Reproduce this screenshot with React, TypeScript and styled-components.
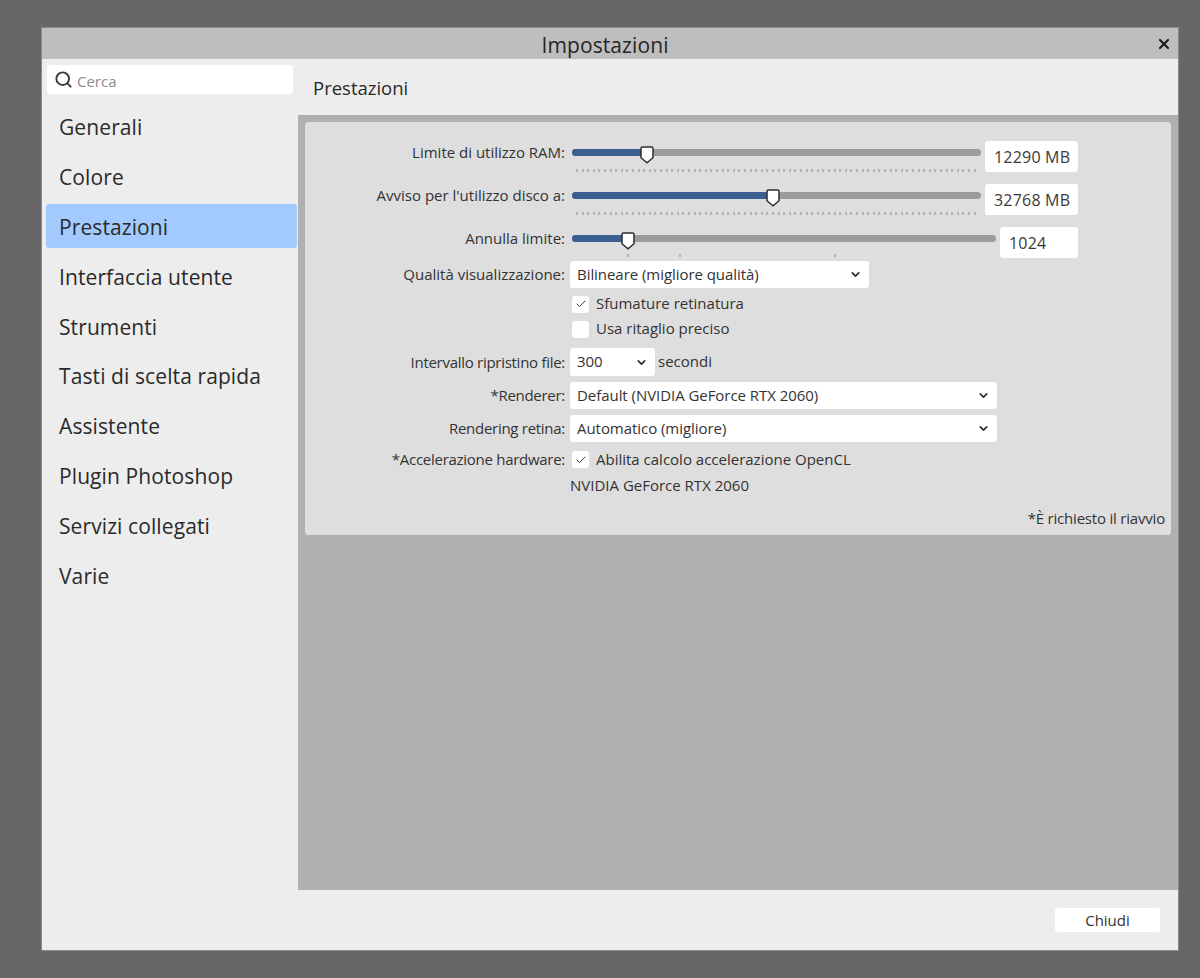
import React from 'react'
import styled, { createGlobalStyle } from 'styled-components'
import { Check, ChevronDown, Search, X } from 'lucide-react'

const GlobalStyle = createGlobalStyle`
  html, body {
    margin: 0;
    padding: 0;
    background: #676767;
  }
  body {
    font-family: 'Open Sans', 'Noto Sans', sans-serif;
    color: #2b2b2b;
  }
`

const sections = [
  'Generali',
  'Colore',
  'Prestazioni',
  'Interfaccia utente',
  'Strumenti',
  'Tasti di scelta rapida',
  'Assistente',
  'Plugin Photoshop',
  'Servizi collegati',
  'Varie',
]

const Page = styled.div`
  width: 1200px;
  height: 978px;
  padding: 28px 22px 28px 42px;
  box-sizing: border-box;
  overflow: hidden;
`

const Dialog = styled.div`
  height: 922px;
  display: flex;
  flex-direction: column;
  background: #ededed;
  box-shadow: 0 0 0 1px #8a8a8a;
`

const TitleBar = styled.div`
  position: relative;
  flex: 0 0 31px;
  display: flex;
  align-items: center;
  justify-content: center;
  box-sizing: border-box;
  padding: 2px 10px 0 0;
  background: #bebebe;
  font-size: 21px;
  letter-spacing: 0.1px;
  color: #262626;
`

const CloseButton = styled.span`
  position: absolute;
  right: 6px;
  top: 8px;
  display: flex;
  color: #1c1c1c;
`

const Body = styled.div`
  flex: 1;
  display: flex;
  min-height: 0;
`

const Sidebar = styled.aside`
  flex: 0 0 256px;
  box-sizing: border-box;
  padding: 6px 1px 0 4px;
`

const SearchBox = styled.div`
  height: 29px;
  margin: 0 4px 10px 1px;
  display: flex;
  align-items: center;
  gap: 4px;
  padding: 2px 0 0 7px;
  box-sizing: border-box;
  background: #fff;
  border-radius: 3px;
  font-size: 15px;
  color: #8d8d8d;
  svg {
    color: #3a3a3a;
    margin-top: -3px;
  }
`

const NavList = styled.nav`
  display: flex;
  flex-direction: column;
  gap: 5.9px;
`

const NavItem = styled.div<{ $active?: boolean }>`
  height: 44px;
  display: flex;
  align-items: center;
  padding: 2px 0 0 13px;
  box-sizing: border-box;
  border-radius: 3px;
  font-size: 21px;
  letter-spacing: 0.1px;
  color: #2a2a2a;
  background: ${p => (p.$active ? '#a2cafe' : 'transparent')};
`

const Main = styled.main`
  flex: 1;
  display: flex;
  flex-direction: column;
  min-width: 0;
`

const Heading = styled.div`
  flex: 0 0 56px;
  display: flex;
  align-items: center;
  box-sizing: border-box;
  padding: 1px 0 0 15px;
  font-size: 18.5px;
  color: #2a2a2a;
`

const Content = styled.div`
  flex: 1;
  padding: 7px;
  background: #b0b0b0;
`

const Panel = styled.section`
  position: relative;
  height: 413px;
  box-sizing: border-box;
  padding-top: 19px;
  background: #dedede;
  border-radius: 3px;
`

const Row = styled.div<{ $top?: number; $height: number }>`
  display: grid;
  grid-template-columns: 260px 1fr;
  column-gap: 5px;
  align-items: center;
  height: ${p => p.$height}px;
  margin-top: ${p => p.$top ?? 0}px;
`

const Label = styled.label<{ $slider?: boolean; $tight?: boolean }>`
  justify-self: end;
  align-self: ${p => (p.$slider ? 'start' : 'center')};
  line-height: ${p => (p.$slider ? '23px' : 'normal')};
  margin-top: ${p => (p.$slider ? '0' : '-1px')};
  font-size: 15px;
  letter-spacing: ${p => (p.$tight ? '-0.28px' : '0')};
  white-space: nowrap;
  color: #333;
`

const Controls = styled.div`
  display: flex;
  align-items: center;
  min-width: 0;
  font-size: 15px;
  color: #333;
`

const SliderField = styled.div<{ $width: number }>`
  position: relative;
  flex: 0 0 ${p => p.$width}px;
  margin-left: 2px;
  height: 31px;
`

const Track = styled.div`
  position: absolute;
  left: 0;
  right: 0;
  top: 8px;
  height: 7px;
  border-radius: 4px;
  background: #9c9c9c;
`

const TrackFill = styled.div`
  height: 100%;
  border-radius: 4px 0 0 4px;
  background: #3a5f8f;
`

const Thumb = styled.svg`
  position: absolute;
  top: 5px;
  margin-left: -7px;
`

const DottedTicks = styled.div`
  position: absolute;
  left: 4px;
  right: 3px;
  top: 28px;
  height: 3px;
  background: repeating-linear-gradient(90deg, #b3b3b3 0 2px, transparent 2px 5.6px);
`

const Tick = styled.i`
  position: absolute;
  top: 27px;
  width: 2px;
  height: 3px;
  background: #b3b3b3;
`

const ValueInput = styled.div<{ $width: number }>`
  flex: 0 0 ${p => p.$width}px;
  box-sizing: border-box;
  height: 31px;
  margin-left: 4px;
  padding: 4px 0 0 9px;
  line-height: 24px;
  background: #fff;
  border-radius: 3px;
  font-size: 16px;
  letter-spacing: 0.2px;
  color: #3a3a3a;
`

const Select = styled.div<{ $width: number }>`
  flex: 0 0 ${p => p.$width}px;
  box-sizing: border-box;
  height: 100%;
  display: flex;
  align-items: center;
  justify-content: space-between;
  padding: 0 7px 0 7px;
  background: #fff;
  border-radius: 3px;
  color: #333;
  svg {
    color: #2a2a2a;
  }
`

const SelectText = styled.span`
  margin-top: -2px;
  letter-spacing: -0.05px;
`

const SelectRow = styled(Controls)`
  height: 100%;
`

const Box = styled.span`
  flex: 0 0 17px;
  height: 17px;
  margin: 0 7px 0 2px;
  display: flex;
  align-items: center;
  justify-content: center;
  background: #fff;
  border-radius: 3px;
  color: #3d3d3d;
`

const CheckText = styled.span`
  margin-top: -2px;
`

const Suffix = styled.span`
  margin: -2px 0 0 3px;
`

const Footnote = styled.div`
  position: absolute;
  right: 6px;
  bottom: 7px;
  font-size: 15px;
  letter-spacing: -0.2px;
  color: #333;
`

const Footer = styled.footer`
  flex: 0 0 60px;
  display: flex;
  align-items: flex-start;
  justify-content: flex-end;
  box-sizing: border-box;
  padding: 18px 18px 0 0;
`

const Button = styled.button`
  width: 105px;
  height: 24px;
  padding: 0;
  border: 0;
  border-radius: 3px;
  background: #fff;
  font-family: inherit;
  font-size: 15px;
  color: #333;
`

const Slider = ({ value, width, ticks }: { value: number; width: number; ticks?: number[] }) => (
  <SliderField $width={width}>
    <Track>
      <TrackFill style={{ width: value }} />
    </Track>
    {ticks ? ticks.map(t => <Tick key={t} style={{ left: t }} />) : <DottedTicks />}
    <Thumb width="14" height="18" viewBox="0 0 14 18" style={{ left: value }}>
      <path
        d="M2.5 1h9a1.5 1.5 0 0 1 1.5 1.5v9.2L7 16.8 1 11.7V2.5A1.5 1.5 0 0 1 2.5 1z"
        fill="#fff"
        stroke="#2e2e2e"
        strokeWidth="1.5"
      />
    </Thumb>
  </SliderField>
)

const Dropdown = ({ width, children }: { width: number; children: React.ReactNode }) => (
  <Select $width={width}>
    <SelectText>{children}</SelectText>
    <ChevronDown size={13} strokeWidth={3} />
  </Select>
)

const CheckBox = ({ checked }: { checked?: boolean }) => (
  <Box>{checked && <Check size={12} strokeWidth={2} />}</Box>
)

export default function App() {
  return (
    <Page>
      <GlobalStyle />
      <Dialog>
        <TitleBar>
          Impostazioni
          <CloseButton>
            <X size={16} strokeWidth={3.2} />
          </CloseButton>
        </TitleBar>
        <Body>
          <Sidebar>
            <SearchBox>
              <Search size={19} strokeWidth={2.4} />
              Cerca
            </SearchBox>
            <NavList>
              {sections.map(s => (
                <NavItem key={s} $active={s === 'Prestazioni'}>
                  {s}
                </NavItem>
              ))}
            </NavList>
          </Sidebar>
          <Main>
            <Heading>Prestazioni</Heading>
            <Content>
              <Panel>
                <Row $height={31}>
                  <Label $slider>Limite di utilizzo RAM:</Label>
                  <Controls>
                    <Slider value={75} width={409} />
                    <ValueInput $width={93}>12290 MB</ValueInput>
                  </Controls>
                </Row>
                <Row $top={12} $height={31}>
                  <Label $slider>Avviso per l'utilizzo disco a:</Label>
                  <Controls>
                    <Slider value={201} width={409} />
                    <ValueInput $width={93}>32768 MB</ValueInput>
                  </Controls>
                </Row>
                <Row $top={12} $height={31}>
                  <Label $slider>Annulla limite:</Label>
                  <Controls>
                    <Slider value={56} width={424} ticks={[55, 107, 262]} />
                    <ValueInput $width={78}>1024</ValueInput>
                  </Controls>
                </Row>
                <Row $top={3} $height={27}>
                  <Label>Qualità visualizzazione:</Label>
                  <SelectRow>
                    <Dropdown width={299}>Bilineare (migliore qualità)</Dropdown>
                  </SelectRow>
                </Row>
                <Row $top={7} $height={17}>
                  <span />
                  <Controls>
                    <CheckBox checked />
                    <CheckText>Sfumature retinatura</CheckText>
                  </Controls>
                </Row>
                <Row $top={8} $height={17}>
                  <span />
                  <Controls>
                    <CheckBox />
                    <CheckText>Usa ritaglio preciso</CheckText>
                  </Controls>
                </Row>
                <Row $top={11} $height={28}>
                  <Label $tight>Intervallo ripristino file:</Label>
                  <SelectRow>
                    <Dropdown width={85}>300</Dropdown>
                    <Suffix>secondi</Suffix>
                  </SelectRow>
                </Row>
                <Row $top={6} $height={27}>
                  <Label $tight>*Renderer:</Label>
                  <SelectRow>
                    <Dropdown width={427}>Default (NVIDIA GeForce RTX 2060)</Dropdown>
                  </SelectRow>
                </Row>
                <Row $top={6} $height={27}>
                  <Label $tight>Rendering retina:</Label>
                  <SelectRow>
                    <Dropdown width={427}>Automatico (migliore)</Dropdown>
                  </SelectRow>
                </Row>
                <Row $top={8} $height={17}>
                  <Label $tight>*Accelerazione hardware:</Label>
                  <Controls>
                    <CheckBox checked />
                    <CheckText>Abilita calcolo accelerazione OpenCL</CheckText>
                  </Controls>
                </Row>
                <Row $top={8} $height={18}>
                  <span />
                  <Controls>NVIDIA GeForce RTX 2060</Controls>
                </Row>
                <Footnote>*È richiesto il riavvio</Footnote>
              </Panel>
            </Content>
          </Main>
        </Body>
        <Footer>
          <Button>Chiudi</Button>
        </Footer>
      </Dialog>
    </Page>
  )
}
